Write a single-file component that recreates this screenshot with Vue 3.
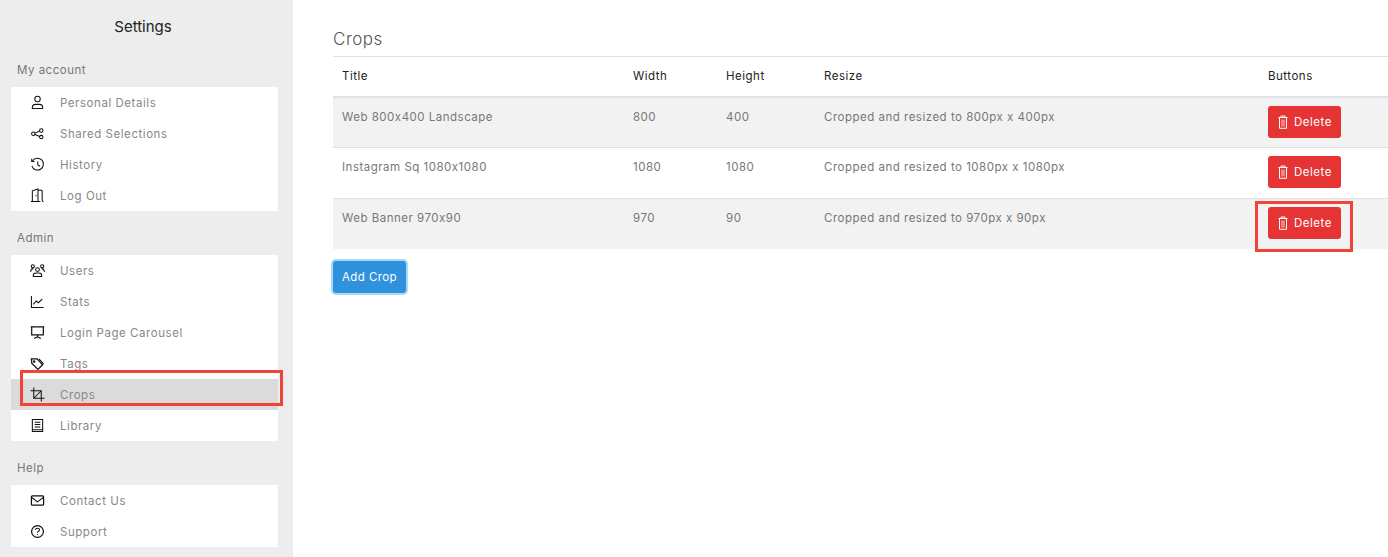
<script setup>
const groups = [
  { title: 'My account', items: [
    { label: 'Personal Details', icon: 'user' },
    { label: 'Shared Selections', icon: 'share' },
    { label: 'History', icon: 'history' },
    { label: 'Log Out', icon: 'door' },
  ]},
  { title: 'Admin', items: [
    { label: 'Users', icon: 'users' },
    { label: 'Stats', icon: 'stats' },
    { label: 'Login Page Carousel', icon: 'screen' },
    { label: 'Tags', icon: 'tag' },
    { label: 'Crops', icon: 'crop', active: true },
    { label: 'Library', icon: 'book' },
  ]},
  { title: 'Help', items: [
    { label: 'Contact Us', icon: 'mail' },
    { label: 'Support', icon: 'help' },
  ]},
]
const rows = [
  ['Web 800x400 Landscape', '800', '400', 'Cropped and resized to 800px x 400px'],
  ['Instagram Sq 1080x1080', '1080', '1080', 'Cropped and resized to 1080px x 1080px'],
  ['Web Banner 970x90', '970', '90', 'Cropped and resized to 970px x 90px'],
]
</script>

<template>
  <div class="page">
    <aside class="sidebar">
      <h2 class="side-title">Settings</h2>
      <section v-for="g in groups" :key="g.title" class="group">
        <div class="group-title">{{ g.title }}</div>
        <ul class="card">
          <li v-for="it in g.items" :key="it.label" class="item" :class="{ active: it.active }">
            <svg class="icon" viewBox="0 0 16 16" fill="none" stroke="#111" stroke-width="1.1">
              <template v-if="it.icon === 'user'">
                <circle cx="8" cy="4.2" r="2.9" /><path d="M2.5 14.5v-1.2c0-2 1.6-3.3 3.5-3.3h4c1.900 0 3.500 1.300 3.500 3.300v1.200z" />
              </template>
              <template v-else-if="it.icon === 'share'">
                <circle cx="3.500" cy="8.300" r="1.800" /><circle cx="12" cy="4.800" r="1.800" /><circle cx="12" cy="11.800" r="1.800" /><path d="M5.200 7.600l5.100-2.200M5.200 9l5.100 2.200" />
              </template>
              <template v-else-if="it.icon === 'history'">
                <path d="M2.600 4.400A6.300 6.300 0 1 1 2 9.500" /><path d="M1.800 1.800v3h3" /><path d="M8.300 4.800v3.600l2.400 1.500" />
              </template>
              <template v-else-if="it.icon === 'door'">
                <path d="M1 14.500h10M2.500 14.500V3l6-2v13.500M8.500 2.500h3.500c.8 0 1 .5 1 1v9.500c0 1 .5 1.500 1.500 1.500" /><path d="M6.500 7.500v1.200" />
              </template>
              <template v-else-if="it.icon === 'users'">
                <circle cx="8" cy="7" r="2" /><circle cx="3" cy="3.500" r="1.700" /><circle cx="13" cy="3.500" r="1.700" /><path d="M3.500 14.500v-1c0-1.500 1-2.800 3-2.800h3c2 0 3 1.300 3 2.800v1zM.7 9.500c0-2.300 1-3.500 3-3.500M15.300 9.500c0-2.300-1-3.500-3-3.500" />
              </template>
              <template v-else-if="it.icon === 'stats'">
                <path d="M1.500 2v12.500h13" /><path d="M3.500 11l3-3.500 2.500 1.800 4-3.800" />
              </template>
              <template v-else-if="it.icon === 'screen'">
                <path d="M.8 2h14.400M1.800 2v8.500h12.400V2M8 10.500v2M4.500 14.500l3.500-2 3.500 2" stroke-width="1.300" />
              </template>
              <template v-else-if="it.icon === 'tag'">
                <path d="M1.500 3h6l6 6.300-5 5L2 8z" stroke-width="1.400" /><path d="M9.500 3l5 5.300" /><circle cx="4.500" cy="5.800" r=".8" />
              </template>
              <template v-else-if="it.icon === 'crop'">
                <path d="M4 .5v11.500h11.500M.5 4H12v11.500M4 12L12 4" />
              </template>
              <template v-else-if="it.icon === 'book'">
                <path d="M2.500 12.500V1.500h11v11zM2.500 12.500v2h11v-2M5 4.500h6M5 7h6M5 9.500h6" />
              </template>
              <template v-else-if="it.icon === 'mail'">
                <rect x="1.500" y="3" width="13" height="10" rx="1" stroke-width="1.300" /><path d="M1.500 4.500L8 9.500l6.500-5" />
              </template>
              <template v-else>
                <circle cx="8" cy="8" r="6.300" stroke-width="1.300" /><path d="M5.800 6.200C6 4.800 7 4.500 8 4.500c1.200 0 2.200.7 2.200 1.700 0 1.500-2.200 1.500-2.200 3.100M8 10.800v1" />
              </template>
            </svg>
            <span>{{ it.label }}</span>
          </li>
        </ul>
      </section>
      <div class="mark mark-side"></div>
    </aside>

    <main class="main">
      <h3 class="heading">Crops</h3>
      <table class="table">
        <colgroup>
          <col style="width:291px" /><col style="width:93px" /><col style="width:98px" /><col style="width:444px" /><col style="width:129px" />
        </colgroup>
        <thead>
          <tr><th>Title</th><th>Width</th><th>Height</th><th>Resize</th><th>Buttons</th></tr>
        </thead>
        <tbody>
          <tr v-for="r in rows" :key="r[0]">
            <td v-for="c in r" :key="c">{{ c }}</td>
            <td>
              <button class="del">
                <svg class="trash" viewBox="0 0 12 14" fill="none" stroke="#fff" stroke-width="1">
                  <path d="M1.500 2.500h9M4 2.500V1h4v1.500M2.500 2.500v10.800h7V2.500" />
                  <path d="M4 4.500h4v7H4z" fill="#fff" fill-opacity=".4" stroke="none" />
                </svg>
                Delete
              </button>
            </td>
          </tr>
        </tbody>
      </table>
      <button class="add">Add Crop</button>
      <div class="mark mark-del"></div>
    </main>
  </div>
</template>

<style>
html, body { margin: 0; overflow: hidden; background: #fff; }
</style>

<style scoped>
.page {
  display: flex;
  height: 557px;
  width: 1388px;
  overflow: hidden;
  font-family: Inter, "Open Sans", sans-serif;
  position: relative;
}
.sidebar {
  width: 293px;
  flex: none;
  background: #ededed;
  padding: 0 15px 0 11px;
  box-sizing: border-box;
}
.side-title {
  margin: 0;
  padding-top: 18px;
  height: 43px;
  box-sizing: border-box;
  line-height: 18px;
  font-size: 15px;
  font-weight: 400;
  color: #222;
  text-align: center;
  width: 264px;
}
.group-title {
  height: 44px;
  padding: 19px 0 0 6px;
  box-sizing: border-box;
  font-size: 11.5px;
  line-height: 16px;
  letter-spacing: .5px;
  color: #777;
}
.card {
  list-style: none;
  margin: 0;
  padding: 0;
  background: #fff;
}
.item {
  height: 31px;
  display: flex;
  align-items: center;
  padding-left: 19px;
  font-size: 11.5px;
  letter-spacing: .55px;
  color: #888;
}
.item.active { background: #dbdbdb; }
.icon { width: 15px; height: 15px; margin-right: 15px; flex: none; }
.main {
  flex: 1;
  min-width: 0;
  padding: 0 0 0 40px;
  position: relative;
}
.heading {
  margin: 0;
  padding-top: 29px;
  height: 56px;
  box-sizing: border-box;
  font-size: 17px;
  line-height: 20px;
  font-weight: 300;
  letter-spacing: .5px;
  color: #555;
}
.table {
  border-collapse: collapse;
  table-layout: fixed;
  width: 1055px;
  font-size: 11.500px;
  letter-spacing: .5px;
}
th {
  height: 40px;
  padding: 0 9px;
  box-sizing: border-box;
  text-align: left;
  font-weight: 400;
  color: #222;
  border-top: 1px solid #dee2e6;
  border-bottom: 2px solid #dee2e6;
}
td {
  height: 51px;
  padding: 11px 9px 0;
  box-sizing: border-box;
  vertical-align: top;
  line-height: 16px;
  color: #777;
  border-bottom: 1px solid #dee2e6;
}
tbody tr:nth-child(odd) td { background: #f2f2f2; }
tbody tr:last-child td { border-bottom: none; height: 50px; }
td:last-child { padding-top: 9px; }
tbody tr:first-child td:last-child { padding-top: 9px; }
.del {
  width: 73px;
  height: 32px;
  border: none;
  border-radius: 3px;
  background: #e53433;
  color: #fff;
  font: inherit;
  letter-spacing: .5px;
  display: flex;
  align-items: center;
  justify-content: center;
  gap: 5px;
  padding: 0;
  margin-top: -1px;
}
.trash { width: 12px; height: 14px; }
.add {
  display: block;
  margin-top: 12px;
  width: 73px;
  height: 32px;
  border: none;
  border-radius: 3px;
  background: #3091dc;
  color: #fff;
  font: inherit;
  font-size: 11.500px;
  letter-spacing: .4px;
  padding: 0;
  box-shadow: 0 0 0 2px #a4dcf8;
}
.mark {
  position: absolute;
  border: 3px solid #f04438;
  box-sizing: border-box;
  pointer-events: none;
}
.mark-side { left: 20px; top: 370px; width: 263px; height: 36px; }
.mark-del { left: 962px; top: 201px; width: 98px; height: 51px; }
</style>
